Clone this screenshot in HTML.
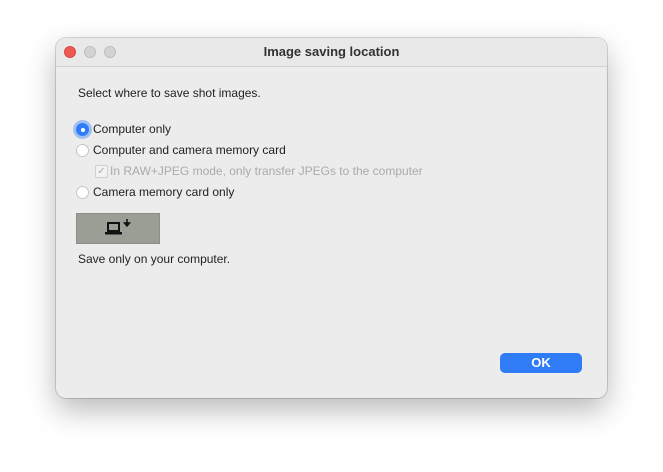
<!DOCTYPE html>
<html><head><style>
body{margin:0;width:663px;height:472px;background:#fff;position:relative;overflow:hidden;font-family:"Liberation Sans",sans-serif;font-size:12px;color:#222}
.win{position:absolute;left:56px;top:38px;width:551px;height:360px;background:#ececec;border-radius:10px;box-shadow:0 12px 30px rgba(0,0,0,.28),0 0 0 1px rgba(0,0,0,.15);overflow:hidden}
.tb{height:28px;border-bottom:1px solid #d2d2d2;background:#e9e9e9;text-align:center;line-height:28px;font-weight:bold;font-size:13px;color:#333}
.d{position:absolute;top:8px;width:12px;height:12px;border-radius:50%;background:#d3d3d3;border:0.5px solid #c0c0c0;box-sizing:border-box}
.t{position:absolute;white-space:nowrap}
.r{position:absolute;width:13px;height:13px;border-radius:50%;background:#fff;border:1px solid #c6c6c6;box-sizing:border-box}
</style></head><body>
<div class="win">
<div class="tb">Image saving location</div>
<div class="d" style="left:8px;background:#ee5a52;border-color:#d84a42"></div>
<div class="d" style="left:28px"></div>
<div class="d" style="left:48px"></div>
<div class="t" style="left:22px;top:48px">Select where to save shot images.</div>
<div class="r" style="left:20px;top:85px;background:#2f7cf6;border:none;box-shadow:0 0 0 3px rgba(70,140,245,.45)"><div style="position:absolute;left:4.5px;top:4.5px;width:4px;height:4px;border-radius:50%;background:#fff"></div></div>
<div class="t" style="left:37px;top:84px">Computer only</div>
<div class="r" style="left:20px;top:106px"></div>
<div class="t" style="left:37px;top:105px">Computer and camera memory card</div>
<div style="position:absolute;left:39px;top:127px;width:11px;height:11px;border:1px solid #d0d0d0;border-radius:2px;background:#f2f2f2;color:#aaa;font-size:10px;line-height:11px;text-align:center">✓</div>
<div class="t" style="left:54px;top:126px;color:#aaa">In RAW+JPEG mode, only transfer JPEGs to the computer</div>
<div class="r" style="left:20px;top:148px"></div>
<div class="t" style="left:37px;top:147px">Camera memory card only</div>
<div style="position:absolute;left:20px;top:175px;width:84px;height:31px;background:#9a9e95;border:1px solid #8a8e86;box-sizing:border-box">
<svg width="84" height="31" style="position:absolute;left:-1px;top:-1px"><rect x="32" y="10" width="11" height="8" fill="none" stroke="#111" stroke-width="2"/><rect x="29" y="19" width="17" height="2.5" fill="#111"/><path d="M51 6v6M48.5 10l2.5 3 2.5-3z" stroke="#111" stroke-width="1.5" fill="#111"/></svg></div>
<div class="t" style="left:22px;top:214px">Save only on your computer.</div>
<div style="position:absolute;left:444px;top:315px;width:82px;height:20px;border-radius:5px;background:#2f7cf6;color:#fff;text-align:center;line-height:20px;font-size:13px;font-weight:bold">OK</div>
</div>
</body></html>
